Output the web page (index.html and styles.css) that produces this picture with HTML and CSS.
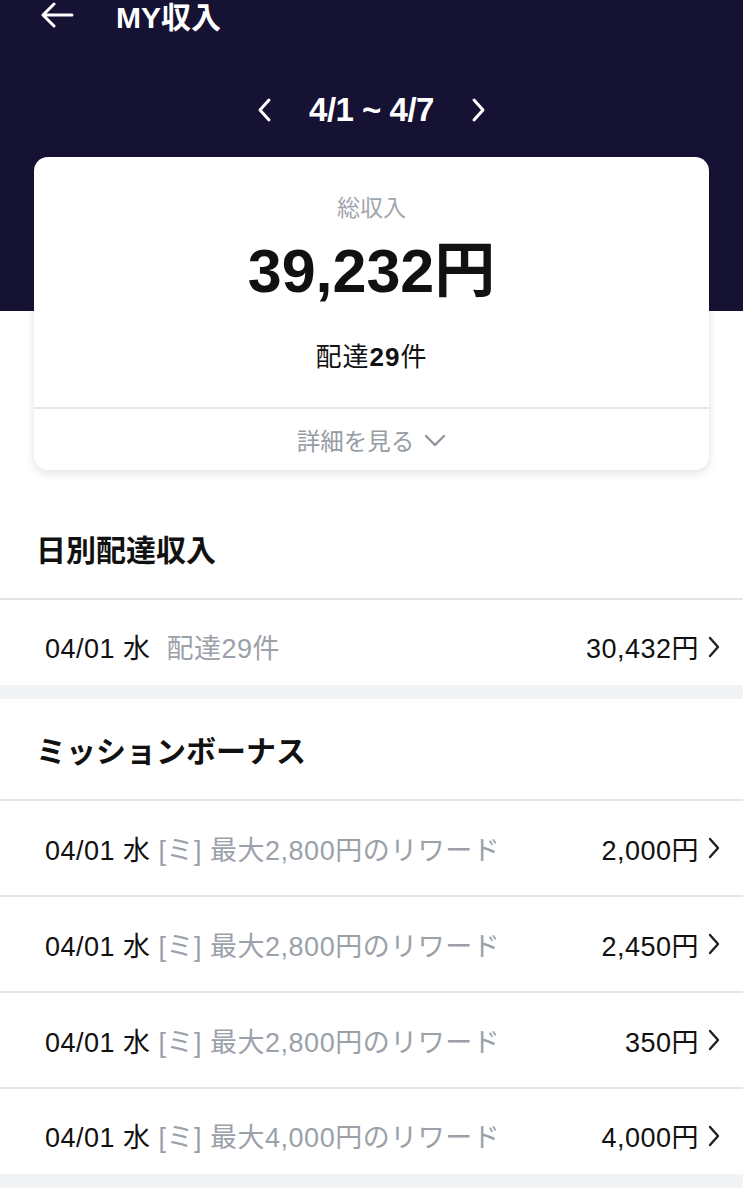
FILE: index.html
```html
<!DOCTYPE html>
<html lang="ja">
<head>
  <meta charset="UTF-8">
  <title>MY収入</title>
  <link rel="stylesheet" href="styles.css">
</head>
<body>

  <div class="top">
    <div class="topbar">
      <svg class="back" width="34" height="26" viewBox="0 0 34 26"><path d="M32 13H3M14 2L3 13l11 11" fill="none" stroke="#fff" stroke-width="3" stroke-linecap="round" stroke-linejoin="round"/></svg>
      <span class="title">MY収入</span>
    </div>

    <div class="range">
      <svg width="16" height="26" viewBox="0 0 16 26"><path d="M12 3L3 13l9 10" fill="none" stroke="#fff" stroke-width="3" stroke-linecap="round" stroke-linejoin="round"/></svg>
      <span class="range-text">4/1 ~ 4/7</span>
      <svg width="16" height="26" viewBox="0 0 16 26"><path d="M4 3l9 10-9 10" fill="none" stroke="#fff" stroke-width="3" stroke-linecap="round" stroke-linejoin="round"/></svg>
    </div>

    <div class="card">
      <div class="card-body">
        <div class="card-label">総収入</div>
        <div class="card-total">39,232円</div>
        <div class="card-count">配達<b>29</b>件</div>
      </div>
      <div class="card-more">
        詳細を見る
        <svg width="22" height="14" viewBox="0 0 22 14"><path d="M2 3l9 9 9-9" fill="none" stroke="#8e949c" stroke-width="2.4" stroke-linecap="round" stroke-linejoin="round"/></svg>
      </div>
    </div>
  </div>

  <div class="section">
    <h2 class="section-title">日別配達収入</h2>
    <div class="row short">
      <span class="row-date">04/01 水</span>
      <span class="row-note">配達29件</span>
      <span class="row-amount">30,432円</span>
      <svg class="chev" width="14" height="24" viewBox="0 0 14 24"><path d="M3 3l8 9-8 9" fill="none" stroke="#222" stroke-width="2.4" stroke-linecap="round" stroke-linejoin="round"/></svg>
    </div>
  </div>

  <div class="band"></div>

  <div class="section">
    <h2 class="section-title">ミッションボーナス</h2>
    <div class="row">
      <span class="row-date">04/01 水</span>
      <span class="row-note tight">[ミ] 最大2,800円のリワード</span>
      <span class="row-amount">2,000円</span>
      <svg class="chev" width="14" height="24" viewBox="0 0 14 24"><path d="M3 3l8 9-8 9" fill="none" stroke="#222" stroke-width="2.4" stroke-linecap="round" stroke-linejoin="round"/></svg>
    </div>
    <div class="row">
      <span class="row-date">04/01 水</span>
      <span class="row-note tight">[ミ] 最大2,800円のリワード</span>
      <span class="row-amount">2,450円</span>
      <svg class="chev" width="14" height="24" viewBox="0 0 14 24"><path d="M3 3l8 9-8 9" fill="none" stroke="#222" stroke-width="2.4" stroke-linecap="round" stroke-linejoin="round"/></svg>
    </div>
    <div class="row">
      <span class="row-date">04/01 水</span>
      <span class="row-note tight">[ミ] 最大2,800円のリワード</span>
      <span class="row-amount">350円</span>
      <svg class="chev" width="14" height="24" viewBox="0 0 14 24"><path d="M3 3l8 9-8 9" fill="none" stroke="#222" stroke-width="2.4" stroke-linecap="round" stroke-linejoin="round"/></svg>
    </div>
    <div class="row short">
      <span class="row-date">04/01 水</span>
      <span class="row-note tight">[ミ] 最大4,000円のリワード</span>
      <span class="row-amount">4,000円</span>
      <svg class="chev" width="14" height="24" viewBox="0 0 14 24"><path d="M3 3l8 9-8 9" fill="none" stroke="#222" stroke-width="2.4" stroke-linecap="round" stroke-linejoin="round"/></svg>
    </div>
  </div>

  <div class="band"></div>

</body>
</html>
```

FILE: styles.css
```css
body {
  margin: 0;
  background: #fff;
  color: #111;
  font-family: 'Liberation Sans', 'Noto Sans CJK JP', sans-serif;
}

.top {
  background: linear-gradient(#151233 311px, #fff 311px);
  padding-bottom: 28px;
}

.topbar {
  display: flex;
  align-items: center;
  height: 30px;
  padding: 0 40px;
}

.back {
  margin-right: 42px;
}

.title {
  color: #fff;
  font-size: 30px;
  font-weight: bold;
}

.range {
  display: flex;
  align-items: center;
  justify-content: center;
  gap: 36px;
  height: 56px;
  margin-top: 52px;
  color: #fff;
}

.range-text {
  font-size: 33px;
  font-weight: bold;
  letter-spacing: -0.5px;
}

.card {
  margin: 19px 34px 0;
  background: #fff;
  border-radius: 14px;
  box-shadow: 0 3px 10px rgba(0, 0, 0, 0.12);
}

.card-body {
  display: flex;
  flex-direction: column;
  align-items: center;
  padding: 36px 0 0;
  height: 252px;
  box-sizing: border-box;
  border-bottom: 2px solid #e6e7e9;
}

.card-label {
  font-size: 23px;
  color: #a1a6ae;
  line-height: 30px;
}

.card-total {
  font-size: 61px;
  font-weight: bold;
  line-height: 66px;
  margin-top: 15px;
}

.card-count {
  font-size: 26px;
  letter-spacing: 1px;
  line-height: 30px;
  margin-top: 38px;
}

.card-more {
  display: flex;
  align-items: center;
  justify-content: center;
  gap: 10px;
  height: 61px;
  font-size: 23.5px;
  color: #969ca4;
}

.section-title {
  margin: 0;
  height: 100px;
  display: flex;
  align-items: center;
  padding-left: 36px;
  font-size: 30px;
  font-weight: bold;
  border-bottom: 2px solid #e4e5e7;
}

.row {
  display: flex;
  align-items: center;
  height: 96px;
  box-sizing: border-box;
  padding: 0 22px 0 45px;
  font-size: 27px;
  letter-spacing: 0.5px;
  border-bottom: 2px solid #e4e5e7;
}

.row.short {
  height: 85px;
  padding-top: 8px;
  border-bottom: none;
}

.row-date {
  margin-right: 16px;
}

.row-note {
  color: #9ba1a9;
  flex: 1;
}

.row-note.tight {
  margin-left: -8px;
}

.row-amount {
  margin-right: 8px;
}

.band {
  height: 14px;
  background: #f2f3f5;
}
```
